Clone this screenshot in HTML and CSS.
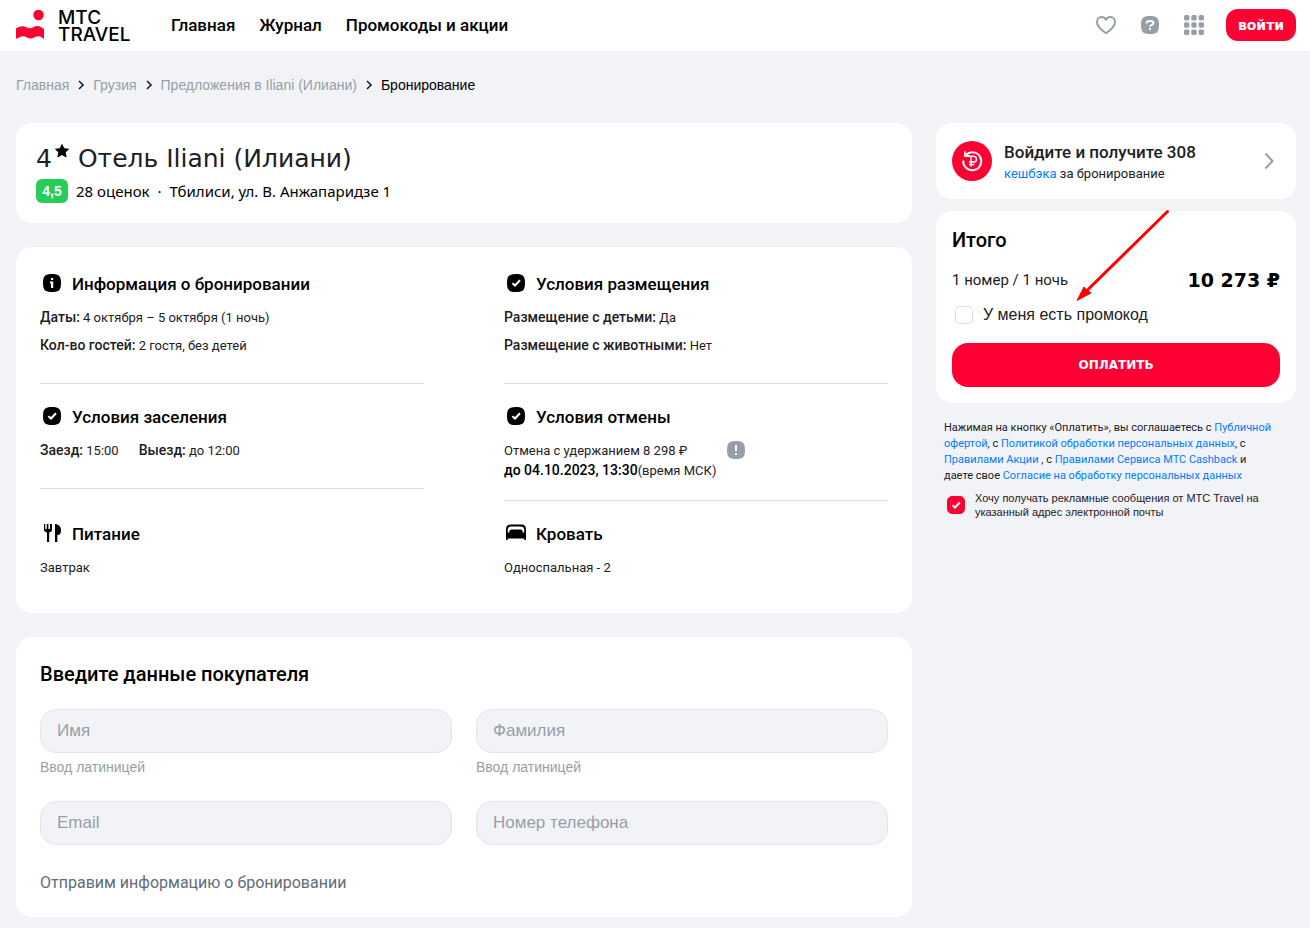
FILE: index.html
```html
<!DOCTYPE html>
<html lang="ru">
<head>
<meta charset="utf-8">
<title>Бронирование — МТС Travel</title>
<link rel="stylesheet" href="styles.css">
</head>
<body>
<header class="header">
  <a class="logo" href="#">
    <svg class="logo-mark" viewBox="0 0 28 30" aria-hidden="true">
      <circle cx="22.500" cy="5" r="5.200" fill="#ff0032"/>
      <path d="M0 18.500C2.500 16.800 5 16 7.500 16.200C10 16.500 12 18.600 14.500 18.300C17 18 18.500 15.900 21 16C24 16.100 26 17.500 28 19V29C26 27.500 24.500 26 22 26.200C19 26.400 17 28.500 14 28.400C11.500 28.300 9.500 26.100 7 26.200C4.500 26.300 2.500 27.600 0 28.800Z" fill="#ff0032"/>
    </svg>
    <span class="logo-text">МТС<br>TRAVEL</span>
  </a>
  <nav class="nav">
    <a href="#">Главная</a>
    <a href="#">Журнал</a>
    <a href="#">Промокоды и акции</a>
  </nav>
  <div class="tools">
    <button class="tool" type="button" aria-label="Избранное">
      <svg viewBox="0 0 24 24"><path d="M12 20.200C9 18 3 14 3 8.900C3 6 5 4 7.400 4C9.500 4 11 5 12 6.800C13 5 14.500 4 16.600 4C19 4 21 6 21 8.900C21 14 15 18 12 20.200Z" fill="none" stroke="#969fa8" stroke-width="2" stroke-linejoin="round"/></svg>
    </button>
    <button class="tool" type="button" aria-label="Помощь">
      <svg viewBox="0 0 24 24"><path d="M3 12C3 5 5 3 12 3S21 5 21 12S19 21 12 21S3 19 3 12Z" fill="#969fa8"/><path d="M8.500 10.500V9.800C8.500 8.300 9.800 7.900 12 7.900S15.500 8.400 15.500 9.900C15.500 12.200 12 11.400 12 13.800" fill="none" stroke="#fff" stroke-width="2"/><rect x="11" y="15" width="2" height="2" fill="#fff"/></svg>
    </button>
    <button class="tool" type="button" aria-label="Сервисы">
      <svg viewBox="0 0 24 24" fill="#969fa8"><rect x="2" y="2" width="5.400" height="5.400" rx="1.600"/><rect x="9.300" y="2" width="5.400" height="5.400" rx="1.600"/><rect x="16.600" y="2" width="5.400" height="5.400" rx="1.600"/><rect x="2" y="9.300" width="5.400" height="5.400" rx="1.600"/><rect x="9.300" y="9.300" width="5.400" height="5.400" rx="1.600"/><rect x="16.600" y="9.300" width="5.400" height="5.400" rx="1.600"/><rect x="2" y="16.600" width="5.400" height="5.400" rx="1.600"/><rect x="9.300" y="16.600" width="5.400" height="5.400" rx="1.600"/><rect x="16.600" y="16.600" width="5.400" height="5.400" rx="1.600"/></svg>
    </button>
    <button class="login" type="button">войти</button>
  </div>
</header>

<nav class="crumbs" aria-label="Навигация">
  <a href="#">Главная</a>
  <svg class="crumb-sep" viewBox="0 0 8 12"><path d="M2 2L6 6L2 10" /></svg>
  <a href="#">Грузия</a>
  <svg class="crumb-sep" viewBox="0 0 8 12"><path d="M2 2L6 6L2 10" /></svg>
  <a href="#">Предложения в Iliani (Илиани)</a>
  <svg class="crumb-sep" viewBox="0 0 8 12"><path d="M2 2L6 6L2 10" /></svg>
  <span class="crumb-current">Бронирование</span>
</nav>

<div class="page">
  <main class="main">
    <section class="card hotel">
      <h1 class="hotel-title">
        <span>4</span>
        <svg class="star" viewBox="0 0 14 14" aria-hidden="true"><path d="M7 .6L8.900 4.700L13.500 5.200L10.100 8.300L11.200 12.900L7 10.500L2.800 12.900L3.900 8.300L.5 5.200L5.100 4.700Z" stroke="#000" stroke-linejoin="round"/></svg>
        <span>Отель Iliani (Илиани)</span>
      </h1>
      <p class="hotel-meta"><span class="rating">4,5</span><span>28 оценок</span><span>·</span><span>Тбилиси, ул. В. Анжапаридзе 1</span></p>
    </section>

    <section class="card info">
      <div class="cell">
        <h2 class="cell-title"><svg class="icon" viewBox="0 0 24 24"><path d="M3 11C3 4 5 2 12 2S21 4 21 11S19 20 12 20S3 18 3 11Z"/><path d="M11 6h2.200v2H11zM10 9.600h3.200V16H11v-4.400h-1z" fill="#fff"/></svg>Информация о бронировании</h2>
        <p><b>Даты:</b> 4 октября – 5 октября (1 ночь)</p>
        <p class="next"><b>Кол-во гостей:</b> 2 гостя, без детей</p>
      </div>
      <div class="cell">
        <h2 class="cell-title"><svg class="icon" viewBox="0 0 24 24"><path d="M3 11C3 4 5 2 12 2S21 4 21 11S19 20 12 20S3 18 3 11Z"/><path d="M8.400 11.200L11 13.500L16 8.300" fill="none" stroke="#fff" stroke-width="2"/></svg>Условия размещения</h2>
        <p><b>Размещение с детьми:</b> Да</p>
        <p class="next"><b>Размещение с животными:</b> Нет</p>
      </div>
      <div class="cell">
        <h2 class="cell-title"><svg class="icon" viewBox="0 0 24 24"><path d="M3 11C3 4 5 2 12 2S21 4 21 11S19 20 12 20S3 18 3 11Z"/><path d="M8.400 11.200L11 13.500L16 8.300" fill="none" stroke="#fff" stroke-width="2"/></svg>Условия заселения</h2>
        <p class="times"><span><b>Заезд:</b> 15:00</span><span><b>Выезд:</b> до 12:00</span></p>
      </div>
      <div class="cell cell-tight">
        <h2 class="cell-title"><svg class="icon" viewBox="0 0 24 24"><path d="M3 11C3 4 5 2 12 2S21 4 21 11S19 20 12 20S3 18 3 11Z"/><path d="M8.400 11.200L11 13.500L16 8.300" fill="none" stroke="#fff" stroke-width="2"/></svg>Условия отмены</h2>
        <div class="cancel">
          <div>
            <p>Отмена с удержанием 8 298 ₽</p>
            <p class="deadline"><b>до 04.10.2023, 13:30</b>(время МСК)</p>
          </div>
          <svg class="icon alert" viewBox="0 0 24 24"><path d="M3 12C3 5 5 3 12 3S21 5 21 12S19 21 12 21S3 19 3 12Z" fill="#969fa8"/><path d="M11 7h2v6h-2zM11 15h2v2h-2z" fill="#fff"/></svg>
        </div>
      </div>
      <div class="cell cell-last">
        <h2 class="cell-title"><svg class="icon" viewBox="0 0 24 24"><path d="M4 2h1.200v5h1.600V2h1.600v5h1.600V2H12v5.500c0 1.700-.8 2.600-2.800 3V20H7V10.500C5 10 4 9.200 4 7.500Z"/><path d="M15 2C19.500 2.500 21 5 21 8.500C21 11.500 20 13 17.300 13V20H15Z"/></svg>Питание</h2>
        <p>Завтрак</p>
      </div>
      <div class="cell cell-last">
        <h2 class="cell-title"><svg class="icon" viewBox="0 0 24 24"><path d="M2 18V8C2 4 3.500 2.500 7 2.500H17C20.500 2.500 22 4 22 8V18H20.200V16.500H3.800V18Z"/><path d="M3.800 10.500V8C3.800 5.500 5 4.500 8 4.500H16C19 4.500 20.200 5.500 20.200 8V10.500H18.700C18.700 8.200 18 7.500 16 7.500H8C6 7.500 5.300 8.200 5.300 10.500Z" fill="#fff"/></svg>Кровать</h2>
        <p>Односпальная - 2</p>
      </div>
    </section>

    <form class="card buyer">
      <h2 class="section-title">Введите данные покупателя</h2>
      <div class="fields">
        <div class="field">
          <input id="name" type="text" placeholder="Имя" aria-label="Имя">
          <label class="hint" for="name">Ввод латиницей</label>
        </div>
        <div class="field">
          <input id="surname" type="text" placeholder="Фамилия" aria-label="Фамилия">
          <label class="hint" for="surname">Ввод латиницей</label>
        </div>
        <div class="field"><input type="email" placeholder="Email" aria-label="Email"></div>
        <div class="field"><input type="tel" placeholder="Номер телефона" aria-label="Номер телефона"></div>
      </div>
      <p class="note">Отправим информацию о бронировании</p>
    </form>
  </main>

  <aside class="side">
    <div class="card cashback">
      <svg class="cashback-icon" viewBox="0 0 40 40" aria-hidden="true">
        <circle cx="20" cy="20" r="20" fill="#ff0032"/>
        <g fill="none" stroke="#fff" stroke-width="2">
          <path d="M11.300 19.500A9 9 0 1 0 14 13.800"/>
          <path d="M13 10.500L12.800 14.800L18 15" stroke-width="1.800"/>
          <path d="M19 25.500V15.300H21.600A2.900 2.900 0 0 1 21.600 21.100H17M17 23.400H22.200" stroke-width="1.500"/>
        </g>
      </svg>
      <div>
        <p class="cashback-title">Войдите и получите 308</p>
        <p><a href="#">кешбэка</a> за бронирование</p>
      </div>
      <svg class="chevron" viewBox="0 0 10 18"><path d="M1.500 1.500L8.500 9L1.500 16.500"/></svg>
    </div>

    <div class="card total">
      <h2 class="section-title">Итого</h2>
      <div class="total-row"><span>1 номер / 1 ночь</span><strong class="price">10 273 ₽</strong></div>
      <label class="promo"><input class="check" type="checkbox"><span>У меня есть промокод</span></label>
      <button class="pay" type="button">Оплатить</button>
      <svg class="pointer" viewBox="0 0 94 94" aria-hidden="true"><path d="M91.500 2.500L10 82.500" stroke="#f00" stroke-width="3" stroke-linecap="round"/><path d="M1 91.500L8 78L10.500 81L15 84Z" fill="#f00" stroke="#f00"/></svg>
    </div>

    <div class="legal">
      <p class="terms">Нажимая на кнопку «Оплатить», вы соглашаетесь с <a href="#">Публичной офертой</a>, с <a href="#">Политикой обработки персональных данных</a>, с <a href="#">Правилами Акции</a> , с <a href="#">Правилами Сервиса МТС Cashback</a> и даете свое <a href="#">Согласие на обработку персональных данных</a></p>
      <label class="ads"><input class="check" type="checkbox" checked><span>Хочу получать рекламные сообщения от МТС Travel на указанный адрес электронной почты</span></label>
    </div>
  </aside>
</div>
</body>
</html>
```
FILE: styles.css
```css
* { box-sizing: border-box; }
body {
  margin: 0;
  background: #f2f3f7;
  color: #1d2023;
  font: 13px/18px Roboto, "Liberation Sans", sans-serif;
}
h1, h2, p { margin: 0; }
a { color: inherit; text-decoration: none; }
b { font-size: 14px; font-weight: 500; line-height: 16px; }
button { border: 0; padding: 0; font: inherit; cursor: pointer; }
svg { display: block; flex: none; }

.header {
  display: flex;
  align-items: center;
  height: 51px;
  padding: 0 14px 2px 16px;
  background: #fff;
}
.logo { display: flex; gap: 14px; align-items: center; width: 131px; }
.logo-mark { width: 28px; height: 30px; }
.logo-text { padding-top: 3px; font: 500 19px/17px Inter, sans-serif; color: #000; }
.nav {
  display: flex;
  gap: 24px;
  margin-left: 24px;
  color: #000;
  font-size: 17px;
  font-weight: 500;
  line-height: 24px;
}
.tools { display: flex; align-items: center; gap: 20px; margin-left: auto; }
.tool { width: 24px; height: 24px; background: none; }
.login {
  width: 70px;
  height: 32px;
  border-radius: 12px;
  background: #ff0032;
  color: #fff;
  font: bold 14px/16px "DejaVu Sans", sans-serif;
}

.crumbs {
  display: flex;
  align-items: center;
  gap: 8px;
  padding: 24px 16px 28px;
  color: #969fa8;
  font: 14px/20px "Liberation Sans", sans-serif;
}
.crumb-sep { width: 8px; height: 12px; fill: none; stroke: #1d2023; stroke-width: 1.6; }
.crumb-current { color: #000; }

.page {
  display: grid;
  grid-template-columns: minmax(0, 1fr) 360px;
  gap: 24px;
  align-items: start;
  padding: 0 14px 11px 16px;
}
.main { display: grid; gap: 24px; }
.card { background: #fff; border-radius: 16px; }

.hotel { padding: 20px; }
.hotel-title { display: flex; font: 25px/32px "DejaVu Sans", sans-serif; }
.star { width: 14px; height: 14px; margin: 1px 9px 0 3px; }
.hotel-meta {
  display: flex;
  gap: 8px;
  margin-top: 4px;
  color: #000;
  font: 15px/24px "Noto Sans", sans-serif;
}
.rating {
  width: 32px;
  border-radius: 6px;
  background: #26cd58;
  color: #fff;
  font: bold 14px/24px "Liberation Sans", sans-serif;
  text-align: center;
}

.info {
  display: grid;
  grid-template-columns: 1fr 1fr;
  column-gap: 80px;
  row-gap: 20px;
  align-items: start;
  padding: 24px;
}
.cell { padding-bottom: 28px; border-bottom: 1px solid #dbdde1; }
.cell-tight { padding-bottom: 20px; }
.cell-last { padding-bottom: 12px; border-bottom: 0; }
.cell-title {
  display: flex;
  gap: 8px;
  align-items: center;
  margin-bottom: 12px;
  color: #000;
  font-size: 17px;
  font-weight: 500;
  line-height: 26px;
}
.icon { width: 24px; height: 24px; }
.next { margin-top: 10px; }
.times { display: flex; gap: 20px; }
.cancel { display: flex; gap: 8px; align-items: flex-start; }
.alert { margin-top: -4px; }
.deadline { margin-top: 2px; }
.deadline b { color: #000; }

.buyer { padding: 24px; }
.section-title { color: #000; font-size: 20px; font-weight: 500; line-height: 26px; }
.fields { display: grid; grid-template-columns: 1fr 1fr; gap: 24px; margin-top: 22px; }
.field input {
  display: block;
  width: 100%;
  height: 44px;
  padding: 0 16px;
  border: 1px solid #e2e5eb;
  border-radius: 16px;
  background: #f2f3f7;
  color: #1d2023;
  font: 17px/24px "Liberation Sans", sans-serif;
}
.field input::placeholder { color: #969fa8; opacity: 1; }
.hint { display: block; margin-top: 4px; color: #969fa8; font: 14px/20px "Liberation Sans", sans-serif; }
.note { margin-top: 28px; color: #626c77; font-size: 16px; line-height: 20px; }

.side { display: grid; gap: 12px; }
.cashback { display: flex; align-items: center; gap: 12px; padding: 16px; }
.cashback-icon { width: 40px; height: 40px; }
.cashback-title { font-size: 17px; font-weight: 500; line-height: 26px; }
.cashback a, .terms a { color: #007cff; }
.chevron { width: 10px; height: 18px; margin: 0 6px 0 auto; fill: none; stroke: #969fa8; stroke-width: 2; }

.total { position: relative; padding: 16px; }
.total-row {
  display: flex;
  justify-content: space-between;
  align-items: center;
  margin-top: 15px;
  font-size: 15px;
  line-height: 24px;
}
.price { color: #000; font: bold 19px/24px "DejaVu Sans", sans-serif; }
.promo {
  display: flex;
  align-items: center;
  gap: 10px;
  margin-top: 11px;
  padding-left: 3px;
  font: 16px/24px "Liberation Sans", sans-serif;
}
.check {
  flex: none;
  width: 18px;
  height: 18px;
  margin: 0;
  border: 1px solid #dbdce4;
  border-radius: 5px;
  background: #fff;
  appearance: none;
}
.check:checked {
  border-color: #ff0032;
  background: #ff0032 url("data:image/svg+xml,%3Csvg xmlns='http://www.w3.org/2000/svg' viewBox='0 0 16 16'%3E%3Cpath d='M4.500 8.300L7 10.500L11.800 5.500' fill='none' stroke='white' stroke-width='2'/%3E%3C/svg%3E");
}
.pay {
  display: block;
  width: 100%;
  height: 44px;
  margin-top: 16px;
  border-radius: 16px;
  background: #ff0032;
  color: #fff;
  font: bold 12px/16px "DejaVu Sans", sans-serif;
  text-transform: uppercase;
}
.pointer { position: absolute; top: -2px; right: 126px; width: 94px; height: 94px; fill: none; }

.legal { padding: 5px 8px 0; font: 11px/14px "Liberation Sans", sans-serif; }
.terms { padding-right: 12px; font: 11px/16px Roboto, sans-serif; }
.ads { display: flex; align-items: center; gap: 10px; margin-top: 7px; padding-left: 3px; }
```
